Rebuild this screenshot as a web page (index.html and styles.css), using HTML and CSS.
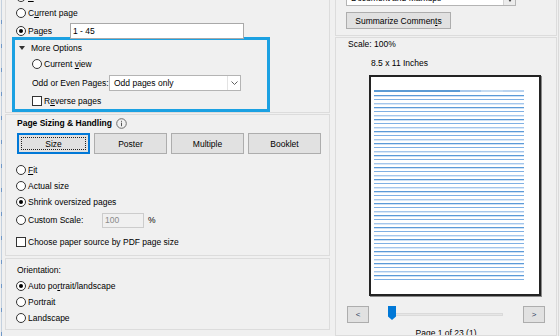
FILE: index.html
```html
<!DOCTYPE html>
<html lang="en">
<head>
    <meta charset="UTF-8">
    <meta name="viewport" content="width=device-width, initial-scale=1.0">
    <title>Print</title>
    <link rel="stylesheet" href="styles.css">
</head>
<body>
<div class="screen">
    <div class="edge edge-left"></div>

    <div class="left">
        <!-- Pages to Print -->
        <div class="panel range">
            <div class="row"><span class="radio"></span><span><u>A</u>ll</span></div>
            <div class="row"><span class="radio"></span><span>C<u>u</u>rrent page</span></div>
            <div class="row pages-row">
                <span class="radio on"></span><span class="pages-label">Pages</span>
                <div class="textbox pages-input">1 - 45</div>
            </div>

            <div class="more-options">
                <div class="row more-title"><span class="tri"></span>More Options</div>
                <div class="row sub"><span class="radio"></span><span>Current <u>v</u>iew</span></div>
                <div class="row sub odd-row">
                    <span class="odd-label">Odd or Even Pages:</span>
                    <div class="combo odd-combo">
                        <span class="combo-text">Odd pages only</span>
                        <span class="combo-btn">
                            <svg width="7" height="4" viewBox="0 0 7 4"><path d="M0.5 0.5 3.5 3.5 6.5 0.5" fill="none" stroke="#606060"/></svg>
                        </span>
                    </div>
                </div>
                <div class="row sub"><span class="check"></span><span>R<u>e</u>verse pages</span></div>
            </div>
        </div>

        <!-- Page Sizing & Handling -->
        <div class="panel sizing">
            <div class="row heading">
                <b>Page Sizing &amp; Handling</b>
                <svg class="info" width="11" height="11" viewBox="0 0 11 11">
                    <circle cx="5.5" cy="5.5" r="4.8" fill="none" stroke="#6d6d6d"/>
                    <rect x="5" y="4.6" width="1" height="3.6" fill="#555"/>
                    <rect x="5" y="2.8" width="1" height="1" fill="#555"/>
                </svg>
            </div>
            <div class="mode-buttons">
                <button class="mode active">Size</button>
                <button class="mode">Poster</button>
                <button class="mode">Multiple</button>
                <button class="mode">Booklet</button>
            </div>
            <div class="row fit-row"><span class="radio"></span><span><u>F</u>it</span></div>
            <div class="row"><span class="radio"></span><span>Actual size</span></div>
            <div class="row"><span class="radio on"></span><span>Shrink oversized pages</span></div>
            <div class="row custom-row">
                <span class="radio"></span><span class="custom-label">Custom Scale:</span>
                <div class="textbox scale-input">100</div>
                <span class="pct">%</span>
            </div>
            <div class="row paper-row"><span class="check"></span><span>Choose paper source by PDF page size</span></div>
        </div>

        <!-- Orientation -->
        <div class="panel orient">
            <div class="row orient-title">Orientation:</div>
            <div class="row"><span class="radio on"></span><span>Auto po<u>r</u>trait/landscape</span></div>
            <div class="row"><span class="radio"></span><span>Portrait</span></div>
            <div class="row"><span class="radio"></span><span>Landscape</span></div>
        </div>
    </div>

    <div class="right">
        <div class="rpanel rtop">
            <div class="combo doc-combo">
                <span class="combo-text">Document and Markups</span>
                <span class="combo-btn doc-btn"><span class="mini-tri"></span></span>
            </div>
            <button class="btn summarize">Summarize Commen<u>t</u>s</button>
        </div>

        <div class="rpanel preview">
            <div class="scale">Scale: 100%</div>
            <div class="inches">8.5 x 11 Inches</div>
            <div class="page">
                <div class="page-head"></div>
                <div class="page-lines"></div>
            </div>
            <div class="slider-row">
                <button class="btn nav">&lt;</button>
                <div class="slider">
                    <div class="track"></div>
                    <svg class="thumb" width="8" height="14" viewBox="0 0 8 14"><path d="M0 0h8v10.5L4 14 0 10.5z" fill="#0078d7"/></svg>
                </div>
                <button class="btn nav">&gt;</button>
            </div>
            <div class="page-count">Page 1 of 23 (1)</div>
        </div>
    </div>

    <div class="edge edge-right"></div>
</div>
</body>
</html>
```

FILE: styles.css
```css
* {
    margin: 0;
    padding: 0;
    box-sizing: border-box;
}

body {
    font-family: "Liberation Sans", Arial, sans-serif;
    font-size: 8.5px;
    color: #000;
    background: #f0f0f0;
    width: 560px;
    height: 336px;
    overflow: hidden;
}

button {
    font-family: inherit;
    font-size: 8.5px;
    color: #000;
}

.screen {
    display: flex;
    height: 336px;
}

/* window edges behind the dialog */
.edge-left {
    width: 3px;
    flex: none;
    background:
        repeating-linear-gradient(to bottom, transparent 0 20px, #6f98c9 20px 24px) 1px 0 / 1px 100% no-repeat,
        linear-gradient(to right, #f0f0f0 0 1px, #c3d0de 1px 2px, #f0f0f0 2px 3px);
}

.edge-right {
    width: 6px;
    flex: none;
    background:
        repeating-linear-gradient(to bottom, transparent 0 28px, #4f86c6 28px 34px) 3px 0 / 3px 100% no-repeat,
        linear-gradient(to right, #f0f0f0 0 1px, #dadada 1px 2px, #f0f0f0 2px 3px, #a9c1de 3px 6px);
}

/* ---------- left column ---------- */
.left {
    width: 328px;
    flex: none;
    padding-left: 2px;
    display: flex;
    flex-direction: column;
}

.panel {
    width: 325px;
    border: 1px solid #dcdcdc;
    padding-left: 10px;
    flex: none;
}

.row {
    display: flex;
    align-items: center;
    height: 16px;
    white-space: nowrap;
}

.row > * {
    flex: none;
}

.radio {
    width: 10px;
    height: 10px;
    border: 1px solid #333;
    border-radius: 50%;
    background: #fff;
    margin-right: 2px;
    position: relative;
}

.radio.on::after {
    content: "";
    position: absolute;
    left: 2px;
    top: 2px;
    width: 4px;
    height: 4px;
    border-radius: 50%;
    background: #000;
}

.check {
    width: 10px;
    height: 10px;
    border: 1px solid #333;
    background: #fff;
    margin-right: 2px;
}

.textbox {
    height: 16px;
    background: #fff;
    border: 1px solid #a9a9a9;
    padding-left: 2px;
    display: flex;
    align-items: center;
}

.range {
    margin-top: -12px;
    height: 125px;
}

.pages-row {
    margin-top: 2px;
}

.pages-label {
    width: 42px;
}

.pages-input {
    width: 174px;
}

.more-options {
    margin-top: -2px;
    margin-left: -4px;
    width: 258px;
    height: 75px;
    border: 3px solid #1ba1e2;
    padding-left: 4px;
}

.tri {
    width: 0;
    height: 0;
    border-left: 3px solid transparent;
    border-right: 3px solid transparent;
    border-top: 4px solid #333;
    margin-right: 6px;
}

.sub {
    padding-left: 13px;
}

.odd-row {
    margin-top: 3px;
}

.odd-label {
    width: 77px;
    overflow: hidden;
}

.combo {
    display: flex;
    height: 16px;
    background: #fff;
    border: 1px solid #b4b4b4;
}

.combo-text {
    flex: 1;
    display: flex;
    align-items: center;
    padding-left: 4px;
    white-space: nowrap;
    overflow: hidden;
}

.combo-btn {
    width: 13px;
    display: flex;
    align-items: center;
    justify-content: center;
    border-left: 1px solid #e3e3e3;
}

.odd-combo {
    width: 132px;
}

.odd-row + .sub {
    margin-top: 2px;
}

/* page sizing */
.sizing {
    margin-top: 1px;
    height: 142px;
}

.heading b {
    margin-left: 1px;
    margin-right: 4px;
}

.mode-buttons {
    display: flex;
    gap: 4px;
    margin-top: 2px;
    margin-left: 1px;
}

.mode {
    width: 73px;
    height: 21px;
    background: #e1e1e1;
    border: 1px solid #adadad;
}

.mode.active {
    border-color: #0078d7;
    box-shadow: inset 0 0 0 1px #0078d7;
    position: relative;
}

.mode.active::after {
    content: "";
    position: absolute;
    inset: 3px;
    border: 1px dotted #222;
}

.fit-row {
    margin-top: 8px;
}

.custom-row {
    margin-top: 2px;
}

.custom-label {
    width: 74px;
}

.scale-input {
    width: 42px;
    height: 15px;
    background: #f0f0f0;
    border-color: #cccccc;
    color: #8a8a8a;
}

.pct {
    margin-left: 4px;
}

.paper-row {
    margin-top: 6px;
}

/* orientation */
.orient {
    margin-top: 2px;
    height: 72px;
    padding-top: 3px;
}

.orient-title {
    margin-left: 1px;
}

/* ---------- right column ---------- */
.right {
    width: 222px;
    flex: none;
    margin-left: 4px;
    display: flex;
    flex-direction: column;
}

.rpanel {
    border: 1px solid #dcdcdc;
    flex: none;
}

.rtop {
    margin-top: -14px;
    height: 50px;
    padding: 3px 0 0 10px;
}

.doc-combo {
    width: 170px;
}

.doc-btn {
    width: 12px;
    background: #ececec;
    border-left: 1px solid #d4d4d4;
}

.mini-tri {
    width: 0;
    height: 0;
    border-left: 2px solid transparent;
    border-right: 2px solid transparent;
    border-top: 3px solid #444;
    margin-top: 4px;
}

.btn {
    background: #e1e1e1;
    border: 1px solid #adadad;
}

.summarize {
    display: block;
    margin-top: 6px;
    width: 105px;
    height: 17px;
}

.preview {
    margin-top: 1px;
    flex: 1;
    overflow: hidden;
}

.scale {
    height: 12px;
    line-height: 12px;
    margin-left: 12px;
}

.inches {
    height: 12px;
    line-height: 12px;
    margin-top: 7px;
    margin-left: 35px;
}

.page {
    margin-top: 6px;
    margin-left: 33px;
    width: 172px;
    height: 221px;
    background: #fff;
    border: 2px solid #232323;
    box-shadow: 1px 1px 0 #8a8a8a;
    padding-left: 3px;
}

.page-head {
    margin-top: 13px;
    width: 150px;
    height: 2px;
    background: linear-gradient(to right, #5b9bd5 0 86px, #a9c9ec 86px 107px, #c4dbf2 107px 129px, #b8d3f0 129px 150px);
}

.page-lines {
    margin-top: 3px;
    width: 150px;
    height: 185px;
    background: repeating-linear-gradient(to bottom,
        #5b9ad8 0 1px, #cfe1f5 1px 2px, #fff 2px 4px,
        #7fb0e4 4px 5px, #fff 5px 8px,
        #a4c6ec 8px 9px, #d9e8f8 9px 10px, #fff 10px 12px);
}

.slider-row {
    display: flex;
    align-items: center;
    height: 17px;
    margin-top: 10px;
    padding-left: 11px;
}

.nav {
    width: 22px;
    height: 17px;
    font-size: 8px;
    color: #2b3f5c;
}

.slider {
    position: relative;
    width: 115px;
    height: 17px;
    margin-left: 19px;
    margin-right: 20px;
    display: flex;
    align-items: center;
}

.track {
    width: 100%;
    height: 3px;
    background: #e6e6e6;
    border: 1px solid #dadada;
}

.thumb {
    position: absolute;
    left: 0;
    top: 0;
}

.page-count {
    margin-top: 4px;
    text-align: center;
    line-height: 12px;
}
```
